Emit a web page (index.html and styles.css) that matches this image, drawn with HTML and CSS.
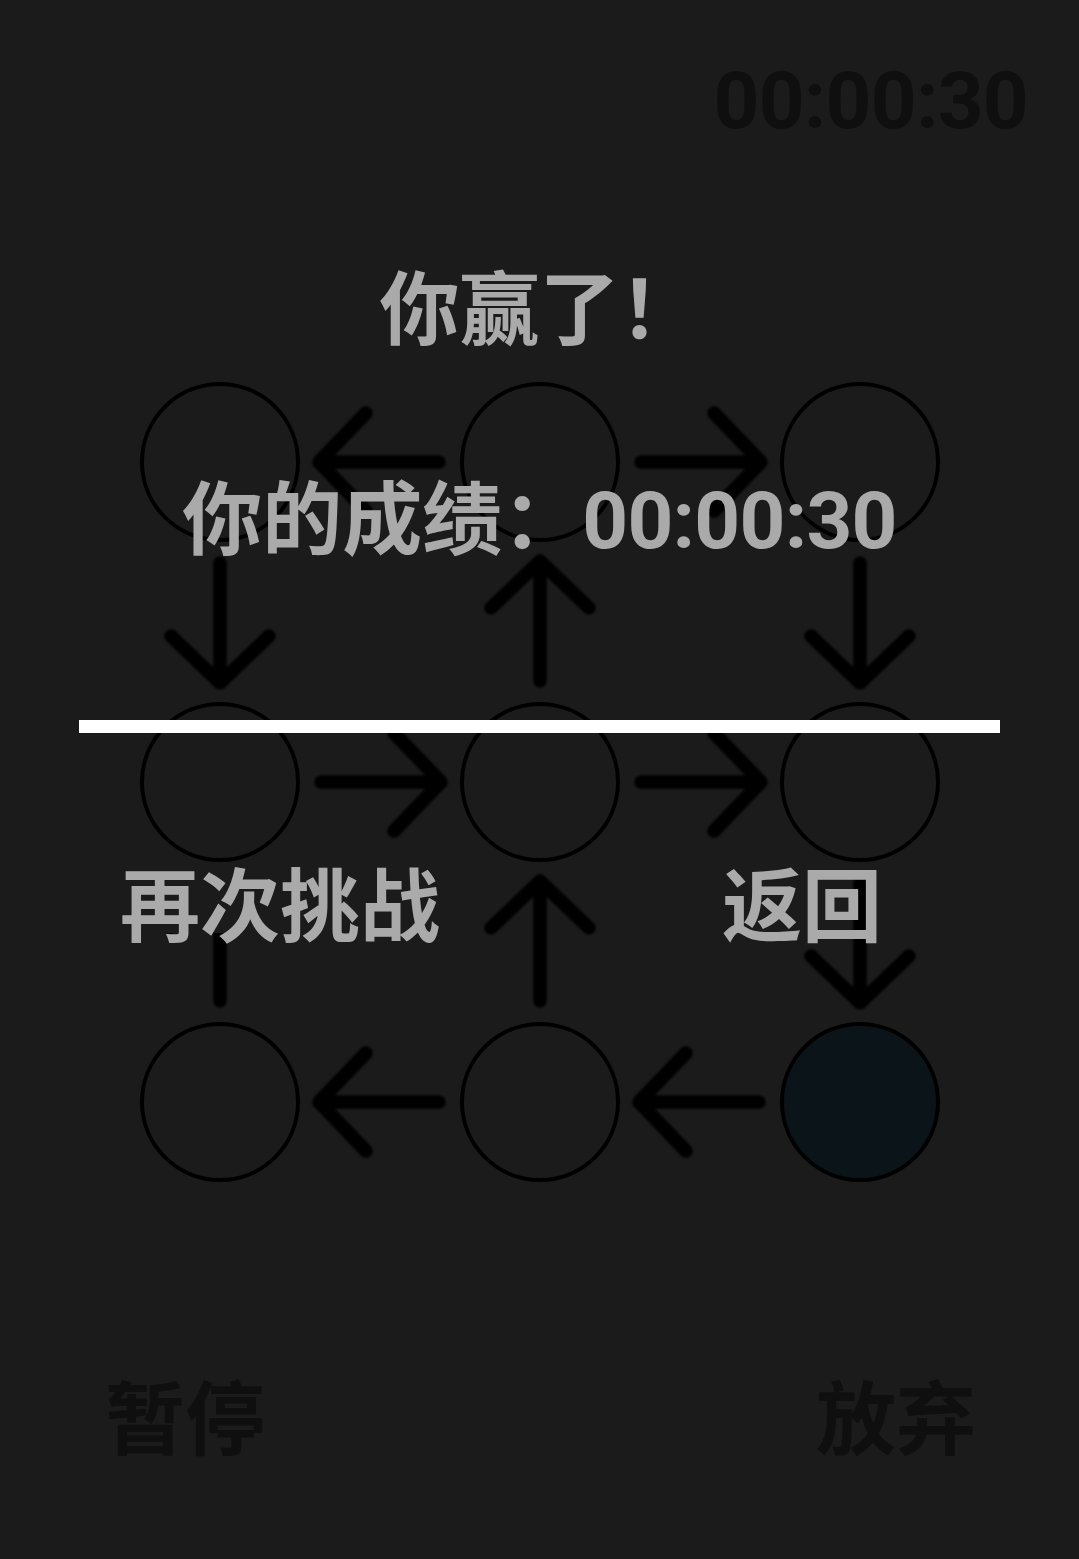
FILE: index.html
```html
<!DOCTYPE html>
<html lang="zh-CN">
<head>
<meta charset="utf-8">
<title>你赢了</title>
<link rel="stylesheet" href="styles.css">
</head>
<body>
<div class="screen">
  <div class="game">
    <div class="timer"><span class="num">00:00:30</span></div>
    <div class="board">
      <div class="node"></div>
      <div class="link"><svg class="arrow left" viewBox="0 0 160 160"><path d="M139 80H19M66 31L19 80L66 129"/></svg></div>
      <div class="node"></div>
      <div class="link"><svg class="arrow right" viewBox="0 0 160 160"><path d="M139 80H19M66 31L19 80L66 129"/></svg></div>
      <div class="node"></div>

      <div class="link"><svg class="arrow down" viewBox="0 0 160 160"><path d="M139 80H19M66 31L19 80L66 129"/></svg></div>
      <div class="cell"></div>
      <div class="link"><svg class="arrow up" viewBox="0 0 160 160"><path d="M139 80H19M66 31L19 80L66 129"/></svg></div>
      <div class="cell"></div>
      <div class="link"><svg class="arrow down" viewBox="0 0 160 160"><path d="M139 80H19M66 31L19 80L66 129"/></svg></div>

      <div class="node"></div>
      <div class="link"><svg class="arrow right" viewBox="0 0 160 160"><path d="M139 80H19M66 31L19 80L66 129"/></svg></div>
      <div class="node"></div>
      <div class="link"><svg class="arrow right" viewBox="0 0 160 160"><path d="M139 80H19M66 31L19 80L66 129"/></svg></div>
      <div class="node"></div>

      <div class="link"><svg class="arrow up" viewBox="0 0 160 160"><path d="M139 80H19M66 31L19 80L66 129"/></svg></div>
      <div class="cell"></div>
      <div class="link"><svg class="arrow up" viewBox="0 0 160 160"><path d="M139 80H19M66 31L19 80L66 129"/></svg></div>
      <div class="cell"></div>
      <div class="link"><svg class="arrow down" viewBox="0 0 160 160"><path d="M139 80H19M66 31L19 80L66 129"/></svg></div>

      <div class="node"></div>
      <div class="link"><svg class="arrow left" viewBox="0 0 160 160"><path d="M139 80H19M66 31L19 80L66 129"/></svg></div>
      <div class="node"></div>
      <div class="link"><svg class="arrow left" viewBox="0 0 160 160"><path d="M139 80H19M66 31L19 80L66 129"/></svg></div>
      <div class="node goal"></div>
    </div>
    <div class="controls">
      <span>暂停</span>
      <span>放弃</span>
    </div>
  </div>

  <div class="overlay">
    <div class="title">你赢了！</div>
    <div class="score">你的成绩：<span class="num">00:00:30</span></div>
    <div class="rule"></div>
    <div class="actions">
      <span class="retry">再次挑战</span>
      <span class="back">返回</span>
    </div>
  </div>
</div>
</body>
</html>
```

FILE: styles.css
```css
html, body {
  margin: 0;
  padding: 0;
  background: #1b1b1b;
}

.screen {
  position: relative;
  width: 1079px;
  height: 1559px;
  overflow: hidden;
  font-family: Roboto, "Noto Sans CJK SC", sans-serif;
  font-weight: 700;
  font-size: 80px;
  line-height: 80px;
}

.num {
  letter-spacing: -0.75px;
}

.game {
  display: flex;
  flex-direction: column;
}

.timer {
  padding: 61px 51px 0 0;
  text-align: right;
  color: #0f0f0f;
}

.board {
  margin: 241px 0 0 140px;
  display: grid;
  grid-template-columns: repeat(5, 160px);
  grid-template-rows: repeat(5, 160px);
}

.node {
  box-sizing: border-box;
  border: 4px solid #000;
  border-radius: 50%;
}

.node.goal {
  background: #0b1519;
}

.link {
  display: flex;
}

.arrow {
  width: 160px;
  height: 160px;
  fill: none;
  stroke: #000;
  stroke-width: 13.5;
  stroke-linecap: round;
  stroke-linejoin: round;
  filter: blur(1.3px);
}

.arrow.right { transform: rotate(180deg); }
.arrow.up { transform: rotate(90deg); }
.arrow.down { transform: rotate(-90deg); }

.controls {
  margin-top: 199px;
  padding: 0 103px 0 105px;
  display: flex;
  justify-content: space-between;
  color: #0f0f0f;
}

.overlay {
  position: absolute;
  top: 0;
  left: 0;
  right: 0;
  bottom: 0;
  display: flex;
  flex-direction: column;
  align-items: center;
  color: #aaaaaa;
}

.title {
  margin-top: 271px;
}

.score {
  margin-top: 130px;
}

.rule {
  align-self: flex-start;
  margin: 159px 0 0 79px;
  width: 921px;
  height: 13px;
  background: #ffffff;
}

.actions {
  align-self: stretch;
  margin-top: 135px;
  padding-left: 120px;
  display: flex;
}

.retry {
  display: inline-block;
  height: 80px;
  background: linear-gradient(#1b1b1b 0 65px, transparent 65px);
}

.back {
  margin-left: 282px;
}
```
